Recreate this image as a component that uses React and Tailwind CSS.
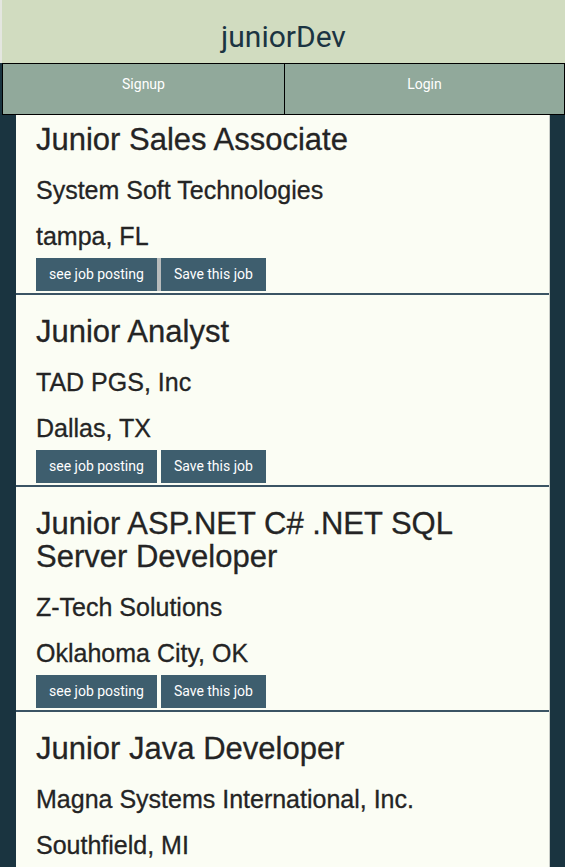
import React from "react";

const jobs = [
  { title: "Junior Sales Associate", company: "System Soft Technologies", location: "tampa, FL" },
  { title: "Junior Analyst", company: "TAD PGS, Inc", location: "Dallas, TX" },
  { title: "Junior ASP.NET C# .NET SQL Server Developer", company: "Z-Tech Solutions", location: "Oklahoma City, OK" },
  { title: "Junior Java Developer", company: "Magna Systems International, Inc.", location: "Southfield, MI" },
];

function Card({ job, first }) {
  return (
    <div
      className={
        "border-b-2 border-[#3b5464] pl-[20px] pr-[20px] " + (first ? "pt-[8px]" : "pt-[20px]")
      }
    >
      <h1 className="text-[31px] leading-[33px] text-[#242424] [-webkit-text-stroke:0.3px_#242424] font-['Liberation_Sans',Arial,sans-serif]">
        {job.title}
      </h1>
      <h2 className="mt-[20px] text-[25px] leading-[28px] text-[#242424] [-webkit-text-stroke:0.3px_#242424] font-['Liberation_Sans',Arial,sans-serif]">
        {job.company}
      </h2>
      <h3 className="mt-[18px] text-[25px] leading-[28px] text-[#242424] [-webkit-text-stroke:0.3px_#242424] font-['Liberation_Sans',Arial,sans-serif]">
        {job.location}
      </h3>
      <div className={"mt-[8px] mb-[2px] flex w-max gap-[4px] " + (first ? "bg-[#b8bcbc]" : "")}>
        <button className="h-[33px] px-[13px] bg-[#3e5e6e] text-white text-[14px] font-['Roboto',sans-serif]">
          see job posting
        </button>
        <button className="h-[33px] px-[13px] bg-[#3e5e6e] text-white text-[14px] font-['Roboto',sans-serif]">
          Save this job
        </button>
      </div>
    </div>
  );
}

export default function App() {
  return (
    <div className="w-[565px] h-[867px] overflow-hidden bg-[#1a3440]">
      <header className="h-[63px] bg-[#d1dcc0] border-l-2 border-[#e4e6e0] flex items-center justify-center">
        <span className="text-[30px] text-[#1b3442] font-['Roboto',sans-serif] pt-[9px]">juniorDev</span>
      </header>
      <nav className="ml-[2px] grid grid-cols-[282px_1fr] h-[52px] border border-black bg-[#91a99b] text-white text-[14px] font-['Roboto',sans-serif]">
        <div className="flex items-center justify-center border-r border-black pb-[10px]">Signup</div>
        <div className="flex items-center justify-center pb-[10px]">Login</div>
      </nav>
      <main className="ml-[16px] mr-[15px] bg-[#fbfdf4] border-r border-[#c8ccc8]">
        {jobs.map((j, i) => (
          <Card key={i} job={j} first={i === 0} />
        ))}
      </main>
    </div>
  );
}
